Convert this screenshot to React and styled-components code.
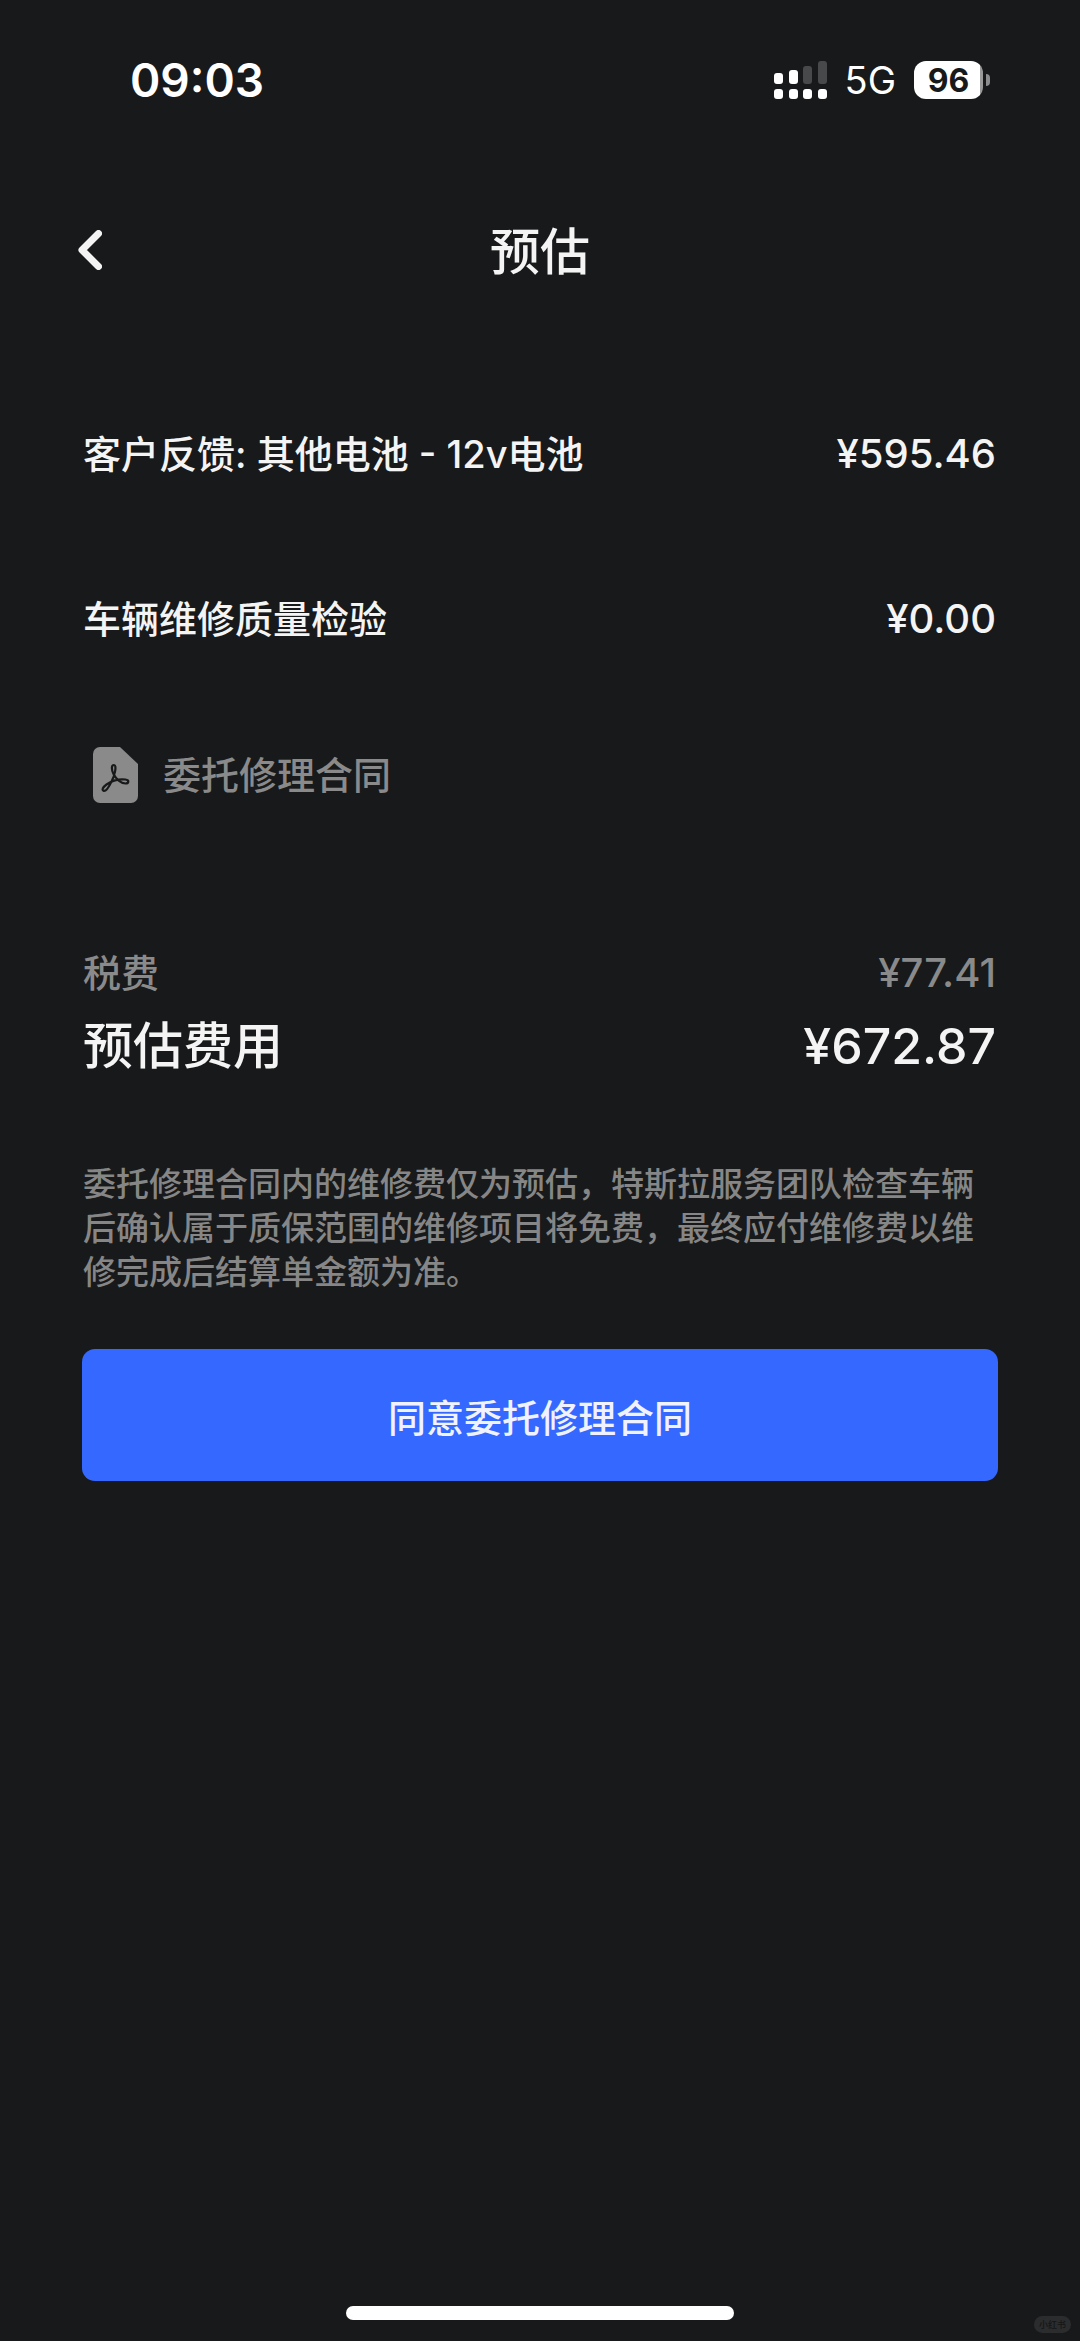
import React from 'react';
import styled, { createGlobalStyle } from 'styled-components';

const GlobalStyle = createGlobalStyle`
  * {
    box-sizing: border-box;
  }

  body {
    margin: 0;
    background-color: #18191a;
    color: #f4f4f4;
    font-family: Inter, 'Noto Sans CJK SC', sans-serif;
  }
`;

const Screen = styled.div`
  display: flex;
  flex-direction: column;
  min-height: 100vh;
`;

const StatusBar = styled.div`
  display: flex;
  align-items: center;
  justify-content: space-between;
  height: 160px;
  padding: 0 90px 0 130px;
  color: #fff;
`;

const Clock = styled.time`
  font-size: 46px;
  font-weight: 600;
  line-height: 60px;
`;

const StatusIcons = styled.div`
  display: flex;
  align-items: center;
  gap: 18px;
`;

const Network = styled.span`
  font-size: 38px;
  line-height: 48px;
`;

const Battery = styled.div`
  display: flex;
  align-items: center;
  gap: 3px;
`;

const BatteryLevel = styled.div`
  display: flex;
  align-items: center;
  justify-content: center;
  width: 69px;
  height: 38px;
  border-radius: 12px;
  background: linear-gradient(to right, #fff 96%, #9a9a9a 96%);
  color: #18191a;
  font-size: 32px;
  font-weight: 700;
`;

const BatteryTip = styled.div`
  width: 4px;
  height: 12px;
  border-radius: 0 6px 6px 0;
  background-color: #8c8c8c;
`;

const Header = styled.header`
  display: grid;
  grid-template-columns: 60px 1fr 60px;
  align-items: center;
  height: 180px;
  padding: 0 60px;
`;

const BackButton = styled.button`
  display: flex;
  align-items: center;
  justify-content: center;
  height: 60px;
  padding: 0;
  border: none;
  background: none;
  color: inherit;
  cursor: pointer;
`;

const Title = styled.h1`
  margin: 0;
  padding-top: 4px;
  font-size: 50px;
  font-weight: 500;
  line-height: 60px;
  text-align: center;
`;

const Content = styled.main`
  flex: 1;
  padding: 89px 82px 0;
`;

const Row = styled.div`
  display: flex;
  align-items: center;
  justify-content: space-between;
  padding: 0 2px 0 1px;
  margin-bottom: ${({ $space }) => $space || 0}px;
  color: ${({ $muted }) => ($muted ? '#8a8a8a' : 'inherit')};
  font-size: ${({ $large }) => ($large ? 50 : 38)}px;
  font-weight: 500;
  line-height: ${({ $large }) => ($large ? 72 : 50)}px;
`;

const Price = styled.span`
  font-size: ${({ $large }) => ($large ? 50 : 40)}px;
`;

const ContractLink = styled.a`
  display: inline-flex;
  align-items: center;
  gap: 25px;
  margin: 0 0 145px 11px;
  color: #8a8a8a;
  font-size: 38px;
  font-weight: 500;
  line-height: 56px;
  text-decoration: none;
`;

const Note = styled.p`
  margin: 80px 0 55px;
  padding: 0 1px;
  color: #868686;
  font-size: 33px;
  font-weight: 500;
  line-height: 44px;
`;

const SubmitButton = styled.button`
  width: 100%;
  height: 132px;
  border: none;
  border-radius: 13px;
  background-color: #3468ff;
  color: #f0f3ff;
  font-family: inherit;
  font-size: 38px;
  font-weight: 500;
  cursor: pointer;
`;

const Footer = styled.footer`
  position: relative;
  display: flex;
  justify-content: center;
  padding-bottom: 21px;
`;

const HomeIndicator = styled.div`
  width: 36%;
  height: 14px;
  border-radius: 7px;
  background-color: #fff;
`;

const Watermark = styled.span`
  position: absolute;
  right: 9px;
  bottom: 8px;
  width: 37px;
  border-radius: 9px;
  background-color: #2b2c2d;
  color: #151617;
  font-size: 9px;
  font-weight: 500;
  line-height: 17px;
  text-align: center;
`;

const SignalIcon = () => (
  <svg width="53" height="38" viewBox="0 0 53 38" fill="#fff" aria-hidden="true">
    <rect x="0" y="12" width="9" height="11" rx="3" />
    <rect x="15" y="9" width="9" height="14" rx="3" />
    <rect x="29" y="5" width="9" height="18" rx="3" fill="#48494a" />
    <rect x="44" y="0" width="9" height="23" rx="3" fill="#48494a" />
    <rect x="0" y="28" width="9" height="10" rx="3" />
    <rect x="15" y="28" width="9" height="10" rx="3" />
    <rect x="29" y="28" width="9" height="10" rx="3" />
    <rect x="44" y="28" width="9" height="10" rx="3" />
  </svg>
);

const BackIcon = () => (
  <svg width="24" height="40" viewBox="0 0 24 40" fill="none" aria-hidden="true">
    <path
      d="M20.5 3.5 4 20l16.5 16.5"
      stroke="#f4f4f4"
      strokeWidth="7"
      strokeLinecap="round"
      strokeLinejoin="round"
    />
  </svg>
);

// Sheet with a folded corner and the three-lobed loop of the PDF mark
const PdfIcon = () => (
  <svg width="45" height="56" viewBox="0 0 45 56" fill="none" aria-hidden="true">
    <path d="M7 0h20l18 17v32a7 7 0 0 1-7 7H7a7 7 0 0 1-7-7V7a7 7 0 0 1 7-7Z" fill="#8a8a8a" />
    <path
      d="M21 18c-3 0-2.500 5-.5 9 2.500 5 7.500 9.500 12 9.500 3.500 0 4-3.500 0-4-7-.8-14 1.500-19 5-3.500 2.500-5 5.500-3 6.300 2.500 1 5.500-4 8-9.300C22 28 24 18 21 18Z"
      stroke="#18191a"
      strokeWidth="2.2"
      strokeLinejoin="round"
    />
  </svg>
);

const items = [
  { name: '客户反馈: 其他电池 - 12v电池', price: '¥595.46', space: 115 },
  { name: '车辆维修质量检验', price: '¥0.00', space: 103 },
];

const App = () => {
  return (
    <>
      <GlobalStyle />
      <Screen>
        <StatusBar>
          <Clock>09:03</Clock>
          <StatusIcons>
            <SignalIcon />
            <Network>5G</Network>
            <Battery>
              <BatteryLevel>96</BatteryLevel>
              <BatteryTip />
            </Battery>
          </StatusIcons>
        </StatusBar>
        <Header>
          <BackButton type="button" aria-label="返回">
            <BackIcon />
          </BackButton>
          <Title>预估</Title>
        </Header>
        <Content>
          {items.map((item) => (
            <Row key={item.name} $space={item.space}>
              <span>{item.name}</span>
              <Price>{item.price}</Price>
            </Row>
          ))}
          <ContractLink href="#contract">
            <PdfIcon />
            委托修理合同
          </ContractLink>
          <Row $muted $space={12}>
            <span>税费</span>
            <Price>¥77.41</Price>
          </Row>
          <Row $large>
            <span>预估费用</span>
            <Price $large>¥672.87</Price>
          </Row>
          <Note>
            委托修理合同内的维修费仅为预估，特斯拉服务团队检查车辆后确认属于质保范围的维修项目将免费，最终应付维修费以维修完成后结算单金额为准。
          </Note>
          <SubmitButton type="button">同意委托修理合同</SubmitButton>
        </Content>
        <Footer>
          <HomeIndicator />
          <Watermark>小红书</Watermark>
        </Footer>
      </Screen>
    </>
  );
};

export default App;
